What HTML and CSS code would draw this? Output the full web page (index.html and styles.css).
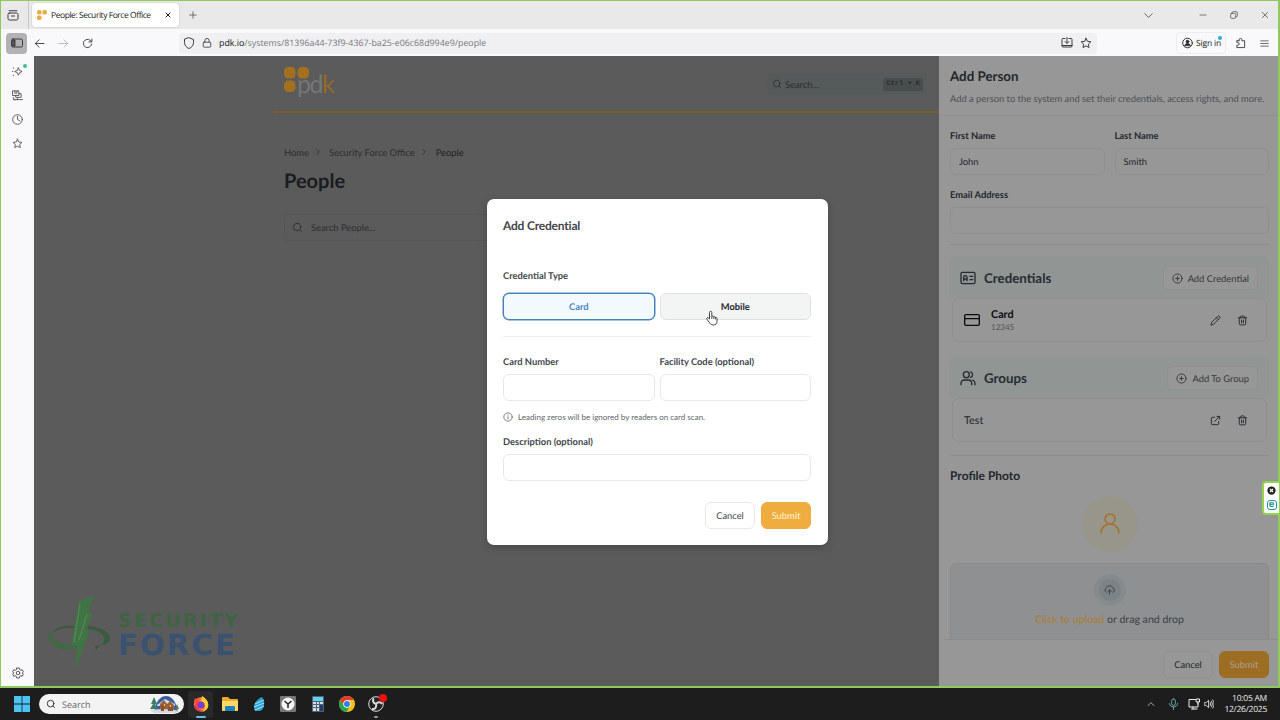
FILE: index.html
```html
<!DOCTYPE html>
<html lang="en">
<head>
  <meta charset="UTF-8">
  <title>People: Security Force Office</title>
  <link rel="stylesheet" href="styles.css">
</head>
<body>
  <svg class="sprite" aria-hidden="true">
    <symbol id="search" viewBox="0 0 24 24"><circle cx="11" cy="11" r="8"/><path d="M21 21l-4.3-4.3"/></symbol>
    <symbol id="chevron" viewBox="0 0 24 24"><path d="M9 18l6-6-6-6"/></symbol>
    <symbol id="plus-circle" viewBox="0 0 24 24"><circle cx="12" cy="12" r="10"/><path d="M12 8v8M8 12h8"/></symbol>
    <symbol id="id-card" viewBox="0 0 24 24"><rect x="1.500" y="3.500" width="21" height="17" rx="2"/><path d="M5.500 16v-5a2.500 2.500 0 0 1 5 0v5M5.500 13.500h5M15 9.500h4M15 14.500h4"/></symbol>
    <symbol id="card" viewBox="0 0 24 24"><rect x="1" y="4" width="22" height="16" rx="2"/><path d="M1 10h22"/></symbol>
    <symbol id="users" viewBox="0 0 24 24"><circle cx="9.500" cy="7" r="4.500"/><path d="M1.500 22v-2a5 5 0 0 1 5-5h6a5 5 0 0 1 5 5v2M16 2.800a4.500 4.500 0 0 1 0 8.400M22.500 22v-2a5 5 0 0 0-3.500-4.700"/></symbol>
    <symbol id="pencil" viewBox="0 0 24 24"><path d="M17 3a2.830 2.830 0 0 1 4 4L7.500 20.500 2 22l1.500-5.500zM14 6l4 4"/></symbol>
    <symbol id="trash" viewBox="0 0 24 24"><path d="M3 6h18M5 6v13a2.500 2.500 0 0 0 2.500 2.500h9A2.500 2.500 0 0 0 19 19V6M8 6V4a2 2 0 0 1 2-2h4a2 2 0 0 1 2 2v2M10 11v6M14 11v6"/></symbol>
    <symbol id="external" viewBox="0 0 24 24"><path d="M10 5H5a2 2 0 0 0-2 2v12a2 2 0 0 0 2 2h12a2 2 0 0 0 2-2v-5M15 3h6v6M10 14L21 3"/></symbol>
    <symbol id="user" viewBox="0 0 24 24"><circle cx="12" cy="7" r="5"/><path d="M3 21c0-5 4-9 9-9s9 4 9 9"/></symbol>
    <symbol id="cloud" viewBox="0 0 24 24"><path d="M5 17A5 5 0 0 1 5 8a7.500 7.500 0 0 1 14-1 5.200 5.200 0 0 1 0 10M8 16l4-4 4 4M12 12v9"/></symbol>
    <symbol id="info" viewBox="0 0 24 24"><circle cx="12" cy="12" r="10"/><path d="M12 11v6M12 7v1"/></symbol>
    <symbol id="star" viewBox="0 0 24 24"><path d="M12 2.500l3 6.200 6.700.9-4.900 4.700 1.200 6.800-6-3.300-6 3.300 1.200-6.800-4.900-4.700 6.700-.9z"/></symbol>
    <symbol id="close" viewBox="0 0 24 24"><path d="M4 4l16 16M20 4L4 20"/></symbol>
    <symbol id="arrow" viewBox="0 0 24 24"><path d="M22 12H3M11 4l-8 8 8 8"/></symbol>
    <symbol id="pdk-dots" viewBox="0 0 24 24"><rect width="11" height="11" rx="4"/><rect x="13" width="11" height="11" rx="4"/><rect y="13" width="11" height="11" rx="4"/></symbol>
  </svg>

  <div class="browser">
    <div class="tabbar">
      <div class="tab-history">
        <svg class="icon" viewBox="0 0 24 24"><rect x="2" y="8" width="20" height="14" rx="3"/><path d="M4 3.500h16M9 14h6"/></svg>
      </div>
      <div class="tab">
        <svg class="favicon"><use href="#pdk-dots"/></svg>
        <span>People: Security Force Office</span>
        <svg class="icon tab-close"><use href="#close"/></svg>
      </div>
      <svg class="icon new-tab" viewBox="0 0 24 24"><path d="M12 2v20M2 12h20"/></svg>
      <div class="window-controls">
        <svg class="icon list-tabs" viewBox="0 0 24 24"><path d="M2 7l10 10L22 7"/></svg>
        <svg class="icon minimize" viewBox="0 0 24 24"><path d="M3 12h18"/></svg>
        <svg class="icon restore" viewBox="0 0 24 24"><rect x="2" y="7" width="15" height="15" rx="3"/><path d="M7 6V5a3 3 0 0 1 3-3h8a4 4 0 0 1 4 4v8a3 3 0 0 1-3 3h-1"/></svg>
        <svg class="icon close"><use href="#close"/></svg>
      </div>
    </div>

    <div class="toolbar">
      <div class="sidebar-toggle">
        <svg class="icon" viewBox="0 0 24 24"><rect x="1" y="4" width="22" height="16" rx="3"/><path d="M3 6h5v12H3z" fill="#555"/></svg>
      </div>
      <svg class="icon nav"><use href="#arrow"/></svg>
      <svg class="icon nav forward"><use href="#arrow"/></svg>
      <svg class="icon nav reload" viewBox="0 0 24 24"><path d="M21 13a9 9 0 1 1-3-7.700L21 8M21.500 2v6.500H15"/></svg>
      <div class="urlbar">
        <svg class="icon" viewBox="0 0 24 24"><path d="M12 1.500l9 3.500v6c0 6-4 10-9 12-5-2-9-6-9-12V5z"/></svg>
        <svg class="icon lock" viewBox="0 0 24 24"><rect x="3" y="10" width="18" height="12" rx="2"/><path d="M7 10V6a5 5 0 0 1 10 0v4"/></svg>
        <p class="url"><b>pdk.io</b>/systems/81396a44-73f9-4367-ba25-e06c68d994e9/people</p>
        <svg class="icon install" viewBox="0 0 24 24"><path d="M8 3H4a2 2 0 0 0-2 2v13a2 2 0 0 0 2 2h16a2 2 0 0 0 2-2V5a2 2 0 0 0-2-2h-4M12 1v11M8 9l4 4 4-4M2 17h20"/></svg>
        <svg class="icon"><use href="#star"/></svg>
      </div>
      <div class="sign-in">
        <svg class="icon" viewBox="0 0 24 24"><circle cx="12" cy="12" r="10.500"/><circle cx="12" cy="9" r="3" fill="#333"/><path d="M6 17c1-5 11-5 12 0z" fill="#333"/></svg>
        <span>Sign in</span>
        <i class="dot"></i>
      </div>
      <svg class="icon puzzle" viewBox="0 0 24 24"><path d="M9 7V5a3 3 0 0 1 6 0v2h6v15H4v-5h2a3 3 0 0 0 0-6H4V7z"/></svg>
      <svg class="icon menu" viewBox="0 0 24 24"><path d="M2 5h20M2 12h20M2 19h20"/></svg>
    </div>

    <div class="viewport">
      <nav class="sidebar">
        <span class="ai">
          <svg class="icon" viewBox="0 0 24 24"><path d="M14 4l2.500 5.500L22 12l-5.500 2.500L14 20l-2.500-5.500L6 12l5.500-2.500zM3 4v1M3 20v1M1 12h1"/></svg>
          <i class="dot"></i>
        </span>
        <svg class="icon" viewBox="0 0 24 24"><path d="M2 2h13v10H2zM6 2v5h5V2M15 8h5v8H8v-4M5 21h18M12 17v4M3 16v5h4"/></svg>
        <svg class="icon" viewBox="0 0 24 24"><circle cx="12" cy="12" r="10.500"/><path d="M12 5v7l5 3"/></svg>
        <svg class="icon"><use href="#star"/></svg>
        <svg class="icon gear" viewBox="0 0 24 24"><circle cx="12" cy="12" r="3.500"/><path d="M9.500 2h5l.8 3.300 2 1.200 3.200-1 2.300 4-2.300 2.500 2.300 2.500-2.300 4-3.200-1-2 1.200-.8 3.300h-5l-.8-3.300-2-1.200-3.200 1-2.300-4L3.500 12 1.200 9.500l2.300-4 3.200 1 2-1.200z"/></svg>
      </nav>

      <main class="page">
        <header class="page-header">
          <div class="logo">
            <svg><use href="#pdk-dots"/></svg>
            <span>pd<em>k</em></span>
          </div>
          <div class="quick-search">
            <svg class="icon"><use href="#search"/></svg>
            <span>Search...</span>
            <kbd>Ctrl + K</kbd>
          </div>
        </header>
        <div class="breadcrumb">
          <span>Home</span>
          <svg class="icon"><use href="#chevron"/></svg>
          <span>Security Force Office</span>
          <svg class="icon"><use href="#chevron"/></svg>
          <span class="current">People</span>
        </div>
        <h1>People</h1>
        <div class="people-search">
          <svg class="icon"><use href="#search"/></svg>
          <span>Search People...</span>
        </div>
      </main>

      <aside class="drawer">
        <header class="drawer-header">
          <h2>Add Person</h2>
          <p>Add a person to the system and set their credentials, access rights, and more.</p>
        </header>
        <div class="drawer-body">
          <div class="names">
            <div class="field"><label>First Name</label><div class="input">John</div></div>
            <div class="field"><label>Last Name</label><div class="input">Smith</div></div>
          </div>
          <div class="field email"><label>Email Address</label><div class="input"></div></div>
          <hr>
          <section class="group">
            <div class="group-header">
              <svg class="icon"><use href="#id-card"/></svg>
              <h3>Credentials</h3>
              <div class="small-button"><svg class="icon"><use href="#plus-circle"/></svg><span>Add Credential</span></div>
            </div>
            <div class="group-item">
              <svg class="icon card-icon"><use href="#card"/></svg>
              <div class="item-text"><strong>Card</strong><small>12345</small></div>
              <svg class="icon action"><use href="#pencil"/></svg>
              <svg class="icon action"><use href="#trash"/></svg>
            </div>
          </section>
          <section class="group">
            <div class="group-header">
              <svg class="icon"><use href="#users"/></svg>
              <h3>Groups</h3>
              <div class="small-button"><svg class="icon"><use href="#plus-circle"/></svg><span>Add To Group</span></div>
            </div>
            <div class="group-item">
              <div class="item-text">Test</div>
              <svg class="icon action"><use href="#external"/></svg>
              <svg class="icon action"><use href="#trash"/></svg>
            </div>
          </section>
          <hr>
          <h4>Profile Photo</h4>
          <div class="avatar"><svg class="icon"><use href="#user"/></svg></div>
          <div class="upload">
            <div class="upload-icon"><svg class="icon"><use href="#cloud"/></svg></div>
            <p><span>Click to upload</span> or drag and drop</p>
          </div>
        </div>
        <footer class="actions drawer-footer">
          <div class="button cancel">Cancel</div>
          <div class="button submit">Submit</div>
        </footer>
      </aside>
    </div>

    <!-- recording watermark -->
    <div class="watermark">
      <svg viewBox="0 0 64 74">
        <path d="M31 5L46 0 40 17 45 16 38 34 42 34 27 74 29 50 23 50 26 34 28 21z" fill="#3f7544"/>
        <path d="M32 8L26 46M39 18L31 44" stroke="#5d8a5c" stroke-width="1" fill="none"/>
        <path d="M0 38C4 55 16 54 25 53L25 49C13 49 5 46 4 38z" fill="#3f6b43"/>
        <path d="M40 30C54 31 63 37 62 44 60 47 56 49 53 49 60 43 57 35 40 33zM4 37C8 31 17 29 26 30L26 32C16 31 9 34 4 37z" fill="#385a3d"/>
        <path d="M52 49L48 54 47 50z" fill="#385a3d"/>
      </svg>
      <div class="watermark-text"><b>SECURITY</b><strong>FORCE</strong></div>
    </div>

    <div class="modal">
      <h2>Add Credential</h2>
      <label>Credential Type</label>
      <div class="columns types">
        <div class="type selected">Card</div>
        <div class="type">Mobile</div>
      </div>
      <hr>
      <div class="columns">
        <div class="field"><label>Card Number</label><div class="input"></div></div>
        <div class="field"><label>Facility Code (optional)</label><div class="input"></div></div>
      </div>
      <p class="note"><svg class="icon"><use href="#info"/></svg>Leading zeros will be ignored by readers on card scan.</p>
      <div class="field"><label>Description (optional)</label><div class="input"></div></div>
      <div class="actions">
        <div class="button cancel">Cancel</div>
        <div class="button submit">Submit</div>
      </div>
    </div>

    <svg class="cursor" viewBox="0 0 24 30"><path d="M7 17V4a2.300 2.300 0 0 1 4.600 0v8c1-1.500 3.500-1 4 .8 1.500-1 3.200-.3 3.500 1.200 1.500-.6 3 .2 3 2v5c0 5-3 8-7.500 8S8 26 6 23l-4.500-6c-1-2 1.500-3.500 3-2z" fill="#fff"/><path d="M11.600 12v5M15.600 13v4M19.200 14v4"/></svg>

    <div class="side-widget">
      <svg viewBox="0 0 12 12"><circle cx="6" cy="6" r="5.500" fill="#222"/><path d="M4 4l4 4M8 4L4 8" stroke="#fff" stroke-width="1.600"/></svg>
      <b>e</b>
    </div>
  </div>

  <div class="taskbar">
    <svg class="start" viewBox="0 0 16 16"><path d="M0 0h7.600v7.600H0zM8.400 0H16v7.600H8.400zM0 8.400h7.600V16H0zM8.400 8.400H16V16H8.400z" fill="#4cc2f5"/></svg>
    <div class="task-search">
      <svg class="icon"><use href="#search"/></svg>
      <span>Search</span>
      <svg class="scene" viewBox="0 0 30 17">
        <path d="M4 16C6 4 11 0 16 0s10 4 12 16z" fill="#3b5f9b"/>
        <path d="M7 9l8-6 10 5v2H7z" fill="#cdd8e6"/>
        <path d="M10 16V8l4-4 3 4 3-3 4 4v7z" fill="#9a6039"/>
        <path d="M13 16v-3h2v3M19 16v-3h2v3M14 8h1v2h-1M20 9h1v2h-1" fill="#f5c768"/>
        <path d="M4 1l3 7H5l3 5H0l3-5H1zM27 8l2 5h-4z" fill="#417d62"/>
        <path d="M0 14c6-1 23-1 29 1l-4 2H4z" fill="#d3dae3"/>
        <path d="M11 15V9h3v6M18 15v-4h5v4" fill="#88542f"/>
      </svg>
    </div>
    <div class="apps">
      <div class="app active">
        <svg viewBox="0 0 16 16"><circle cx="8" cy="8.500" r="7.200" fill="#ff7e29"/><path d="M9 0c3 2 6 4 6.300 9 0 3-2 6-6 6.800C14 12 12 7 8 6z" fill="#ffcc38"/><path d="M1 5l1-3 2 2 3-2-1 3 3 2-3 1-3 4z" fill="#ff4b3c"/><circle cx="8" cy="9" r="3.600" fill="#7c3bd1"/><path d="M1 9c1 5 5 7 9 6-3-1-5-2-6-5z" fill="#ed2966"/></svg>
      </div>
      <div class="app"><svg viewBox="0 0 16 16"><path d="M0 2q0-1 1-1h5l2 2h7q1 0 1 1v10q0 1-1 1H1q-1 0-1-1z" fill="#e8ad2f"/><path d="M0 5h16v9q0 1-1 1H1q-1 0-1-1z" fill="#ffd965"/><path d="M3 15v-4q0-1 1-1h8q1 0 1 1v4z" fill="#1f83bd"/></svg></div>
      <div class="app"><svg viewBox="0 0 16 16"><path d="M11 1c4 6 2 12-2 14H4C1 9 5 4 11 1z" fill="#2aa2d3"/><path d="M4 8l9-4M3 11l10-4M4 14l9-4" stroke="#a7e2f4" stroke-width="1"/></svg></div>
      <div class="app"><svg viewBox="0 0 16 16"><rect width="16" height="16" rx="1" fill="#767676"/><circle cx="8" cy="8" r="6.500" fill="#f5f5f5"/><path d="M4.500 5L8 8l3.500-3M8 8v4" stroke="#222" stroke-width="1.500" fill="none"/></svg></div>
      <div class="app"><svg viewBox="0 0 16 16"><rect x="2" width="12" height="16" rx="1" fill="#4c6578"/><path d="M3 1h10v4H3z" fill="#62d3ee"/><path d="M3 6h3v2H3zM7 6h2v2H7zM10 6h3v2h-3zM3 9h3v2H3zM7 9h2v2H7zM3 12h3v3H3zM7 12h2v3H7z" fill="#d5dfe4"/><path d="M10 9h3v6h-3z" fill="#223d67"/></svg></div>
      <div class="app"><svg viewBox="0 0 16 16"><circle cx="8" cy="8" r="8" fill="#fbc116"/><path d="M1.100 4A8 8 0 0 1 14.900 4H8L5 10z" fill="#e33b2e"/><path d="M1.100 4a8 8 0 0 0 6.400 12l3.500-6-3 2-3-2z" fill="#26a651"/><circle cx="8" cy="8" r="3.800" fill="#fff"/><circle cx="8" cy="8" r="3" fill="#317fe8"/></svg></div>
      <div class="app running"><svg viewBox="0 0 16 16"><circle cx="8" cy="8" r="7.300" fill="#222" stroke="#ddd"/><path d="M8 8C5 7 4 4 6 2.500M8 8c2-2.500 5-2 6 0M8 8c1 3-1 5.500-4 5" stroke="#ddd" stroke-width="2" fill="none"/></svg><i class="dot"></i></div>
    </div>
    <div class="tray">
      <svg class="icon up" viewBox="0 0 24 24"><path d="M3 17l9-9 9 9"/></svg>
      <svg class="icon mic" viewBox="0 0 24 24"><rect x="8" y="1" width="8" height="14" rx="4"/><path d="M3 11c0 10 18 10 18 0M12 19v5"/></svg>
      <svg class="icon network" viewBox="0 0 24 24"><path d="M15 3H2v15h18v-7M7 22h11M10 18v4M17 2h6v6h-6zM20 8v4"/></svg>
      <svg class="icon volume" viewBox="0 0 24 24"><path d="M1 9h4l6-6v18l-6-6H1zM15 8q3 4 0 8M18 5q5 7 0 14M21 2q7 10 0 20"/></svg>
      <div class="clock"><span>10:05 AM</span><span>12/26/2025</span></div>
    </div>
  </div>
</body>
</html>
```
FILE: styles.css
```css
* {
  box-sizing: border-box;
}

body {
  margin: 0;
  width: 1280px;
  height: 720px;
  overflow: hidden;
  font-family: Lato, "Liberation Sans", sans-serif;
  font-size: 9.35px;
  text-rendering: geometricPrecision;
  color: #22272d;
}

h1, h2, h3, h4, p {
  margin: 0;
}

svg {
  display: block;
  flex-shrink: 0;
}

.sprite {
  position: absolute;
  width: 0;
  height: 0;
}

.icon {
  width: 12px;
  height: 12px;
  fill: none;
  stroke: currentColor;
  stroke-width: 2;
  stroke-linecap: round;
  stroke-linejoin: round;
}

.dot {
  position: absolute;
  border-radius: 50%;
}

/* browser chrome */
.browser {
  position: relative;
  height: 688px;
  border: solid #91c95f;
  border-width: 1px 2px 2px 1px;
  background: #f9f9fb;
}

.tabbar, .toolbar {
  display: flex;
  align-items: center;
  font-family: "Open Sans", sans-serif;
  color: #3c3c40;
}

.tabbar {
  height: 28px;
  background: #e9e9ea;
}

.tab-history {
  display: flex;
  align-items: center;
  width: 28px;
  height: 28px;
  padding-left: 6px;
  border-right: 1px solid #c8c8ca;
}

.tab {
  display: flex;
  align-items: center;
  width: 147px;
  height: 24px;
  margin-left: 3px;
  padding: 0 8px 0 5px;
  border-radius: 4px;
  background: #fff;
  box-shadow: 0 0 2px #bbb;
  font-size: 8.5px;
  letter-spacing: -0.45px;
  color: #202024;
  white-space: nowrap;
}

.favicon {
  width: 10px;
  height: 10px;
  margin-right: 4px;
  fill: #e5ae4c;
}

.tab-close {
  width: 6px;
  height: 6px;
  margin-left: auto;
  stroke-width: 4;
}

.new-tab {
  width: 8px;
  height: 8px;
  margin-left: 10px;
}

.window-controls {
  display: flex;
  align-items: center;
  margin-left: auto;
  padding-right: 9px;
}

.list-tabs {
  width: 9px;
  height: 9px;
  margin-right: 46px;
}

.minimize, .restore {
  width: 8px;
  height: 8px;
  margin-right: 23px;
}

.close {
  width: 8px;
  height: 8px;
}

.toolbar {
  height: 27px;
  padding: 1px 9px 0 5px;
}

.sidebar-toggle {
  display: flex;
  align-items: center;
  justify-content: center;
  width: 21px;
  height: 21px;
  border-radius: 4px;
  background: #b2b2b5;
}

.nav {
  width: 11px;
  height: 11px;
  margin-left: 7px;
}

.forward {
  margin-left: 13px;
  color: #b5b5b8;
  transform: scaleX(-1);
}

.reload {
  margin-left: 13px;
}

.urlbar {
  display: flex;
  align-items: center;
  width: 918px;
  height: 21px;
  margin-left: 86px;
  padding: 0 5px 0 4px;
  border-radius: 4px;
  background: #f0f0f2;
}

.lock {
  width: 10px;
  margin-left: 7px;
}

.url {
  margin: 0 auto 0 7px;
  font-size: 8.85px;
  color: #77777c;
  white-space: nowrap;
}

.url b {
  font-weight: 400;
  color: #111;
}

.install {
  margin-right: 7px;
}

.sign-in {
  position: relative;
  display: flex;
  align-items: center;
  gap: 3px;
  width: 50px;
  height: 22px;
  margin-left: 79px;
  padding-left: 5px;
  border: 1px solid #ececef;
  border-radius: 4px;
  font-size: 8.5px;
  letter-spacing: -0.15px;
  color: #222;
  white-space: nowrap;
}

.sign-in .icon {
  width: 11px;
}

.sign-in .dot {
  top: 3px;
  right: 3px;
  width: 4px;
  height: 4px;
  background: #2ba9d8;
}

.puzzle {
  width: 11px;
  margin-left: 9px;
}

.menu {
  width: 9px;
  height: 9px;
  margin-left: auto;
}

.viewport {
  display: flex;
  height: 630px;
}

.sidebar {
  display: flex;
  flex-direction: column;
  align-items: center;
  gap: 13px;
  width: 33px;
  padding: 10px 0 7px;
  color: #55555a;
}

.sidebar .icon {
  width: 11px;
  height: 11px;
}

.ai {
  position: relative;
}

.ai .dot {
  top: -2px;
  right: -4px;
  width: 4px;
  height: 4px;
  background: #43bd91;
}

.sidebar .gear {
  width: 12px;
  height: 12px;
  margin-top: auto;
}

/* page behind the overlay */
.page {
  flex: 1;
  padding-left: 250px;
  background: #5b5b5b;
  color: #2b2e31;
}

.page-header {
  display: flex;
  align-items: flex-start;
  justify-content: space-between;
  height: 57px;
  margin-left: -11px;
  padding: 11px 12px 0 11px;
  border-bottom: 2px solid #7c5e2c;
}

.logo {
  display: flex;
}

.logo svg {
  width: 25px;
  height: 25px;
  fill: #a2701e;
}

.logo span {
  margin: 3px 0 0 -12px;
  font-size: 25px;
  line-height: 28px;
  letter-spacing: -1.5px;
  color: #747678;
}

.logo em {
  font-style: normal;
  color: #946a28;
}

.quick-search {
  display: flex;
  align-items: center;
  width: 160px;
  height: 22px;
  margin-top: 6px;
  padding: 0 3px 0 4px;
  border: 1px solid #565a59;
  border-radius: 4px;
  background: #575a5a;
}

.quick-search .icon {
  width: 10px;
  height: 10px;
  margin-right: 3px;
}

kbd {
  margin-left: auto;
  padding: 0 3px;
  border-radius: 2px;
  background: #4a4d4e;
  font: bold 7px/13px "Liberation Mono", monospace;
}

.breadcrumb {
  display: flex;
  align-items: center;
  height: 12px;
  margin-top: 33px;
}

.breadcrumb .icon {
  width: 10px;
  height: 10px;
  margin: 0 6px 0 4px;
}

.breadcrumb .current {
  margin-left: 1px;
  color: #1c1f23;
}

h1 {
  margin-top: 11px;
  font-size: 20px;
  line-height: 24px;
  color: #191d21;
}

.people-search {
  display: flex;
  align-items: center;
  gap: 8px;
  width: 300px;
  height: 27px;
  margin-top: 21px;
  padding-left: 7px;
  border: 1px solid #555;
  border-radius: 4px;
}

.people-search .icon {
  width: 11px;
  height: 11px;
}

/* add person drawer */
.drawer {
  display: flex;
  flex-direction: column;
  width: 339px;
  background: #979797;
}

.drawer-header {
  height: 60px;
  padding: 12px 0 0 11px;
  border-bottom: 1px solid #8e8e8e;
}

.drawer-header h2 {
  font-size: 13.33px;
  line-height: 17px;
}

.drawer-header p {
  margin-top: 8px;
  line-height: 12px;
  color: #4d5156;
  white-space: nowrap;
}

.drawer-body {
  flex: 1;
  min-height: 0;
  overflow: hidden;
  padding: 14px 9px 0 11px;
}

.names {
  display: grid;
  grid-template-columns: 1fr 1fr;
  gap: 10px;
}

label {
  display: block;
  line-height: 12px;
  margin-bottom: 6px;
  font-weight: 700;
}

.input {
  height: 27px;
  padding: 0 8px;
  border: 1px solid #8e9090;
  border-radius: 6px;
  line-height: 26px;
}

.email {
  margin-top: 14px;
}

hr {
  height: 1px;
  margin: 10px 0 0;
  border: 0;
  background: #8c8c8c;
}

.group {
  height: 88px;
  margin: 11px 0 0 -1px;
  padding: 0 2px 0 3px;
  border-radius: 6px;
  background: linear-gradient(#919594 42px, #979797 42px);
}

.group + .group {
  margin-top: 12px;
}

.group + hr {
  margin-top: 11px;
}

.group-header {
  display: flex;
  align-items: center;
  height: 42px;
  padding: 2px 9px 0 8px;
  color: #252b31;
}

.group-header > .icon {
  width: 16px;
  height: 16px;
  margin-right: 8px;
}

h3 {
  font-size: 13.33px;
}

.small-button {
  display: flex;
  align-items: center;
  gap: 5px;
  height: 24px;
  margin-left: auto;
  padding: 0 8px;
  border: 1px solid #8f9191;
  border-radius: 5px;
  background: #979797;
  color: #33383d;
}

.small-button .icon {
  width: 11px;
  height: 11px;
}

.group-item {
  display: flex;
  align-items: center;
  gap: 16px;
  height: 44px;
  padding: 0 18px 0 11px;
  border: 1px solid #8e9090;
  border-radius: 7px;
  background: #979797;
}

.card-icon {
  width: 16px;
  height: 16px;
  margin-right: -5px;
  color: #0c0d0e;
}

.item-text {
  flex: 1;
  font-size: 10.8px;
}

.item-text strong, .item-text small {
  display: block;
  line-height: 13px;
}

.item-text strong {
  margin-top: 1px;
  color: #0c0d0e;
}

.item-text small {
  font-size: 8px;
  color: #50545a;
}

.action {
  width: 11px;
  height: 11px;
}

h4 {
  margin-top: 12px;
  font-size: 12px;
  line-height: 15px;
}

.avatar {
  display: grid;
  place-items: center;
  width: 56px;
  height: 56px;
  margin: 13px auto 11px;
  border-radius: 50%;
  background: #98958b;
  color: #a47128;
}

.avatar .icon {
  width: 24px;
  height: 24px;
  stroke-width: 1.5;
}

.upload {
  height: 84px;
  padding-top: 10px;
  border: 1px solid #88898b;
  border-radius: 6px;
  background: #8f9092;
  font-size: 10.6px;
  text-align: center;
  color: #3b4045;
}

.upload-icon {
  display: grid;
  place-items: center;
  width: 32px;
  height: 32px;
  margin: 0 auto 8px;
  border: 5px solid #858b8d;
  border-radius: 50%;
  background: #7b8386;
}

.upload-icon .icon {
  width: 11px;
}

.upload span {
  color: #ad7c2f;
}

.actions {
  display: flex;
  justify-content: flex-end;
  gap: 6px;
}

.button {
  width: 50px;
  height: 27px;
  border: 1px solid #e6e8eb;
  border-radius: 6px;
  line-height: 26px;
  text-align: center;
}

.submit {
  border-color: #efad3f;
  background: #efad3f;
  color: #fff3d8;
}

.drawer-footer {
  height: 47px;
  margin-left: 5px;
  padding: 11px 9px 0 0;
  border-top: 1px solid #8c8c8c;
}

.drawer-footer .cancel {
  border-color: #8f9090;
}

.drawer-footer .submit {
  border-color: #9e6d24;
  background: #9e6d24;
  color: #aaa08c;
}

/* credential dialog */
.modal {
  position: absolute;
  top: 198px;
  left: 486px;
  width: 341px;
  height: 346px;
  padding: 19px 17px 0 16px;
  border-radius: 7px;
  background: #fff;
  box-shadow: 0 3px 8px rgba(0, 0, 0, 0.2);
  color: #41464c;
}

.modal h2 {
  margin-bottom: 36px;
  font-size: 12px;
  line-height: 16px;
  letter-spacing: -0.2px;
}

.columns {
  display: grid;
  grid-template-columns: 1fr 1fr;
  gap: 5px;
}

.types {
  margin-top: 11px;
}

.type {
  height: 27px;
  border: 1px solid #dfe2e4;
  border-radius: 6px;
  background: #f3f5f5;
  line-height: 26px;
  font-weight: 700;
  text-align: center;
  color: #24282d;
}

.selected {
  border-color: #4682b4;
  box-shadow: 0 0 0 0.5px #4b8bc0;
  background: #f3faff;
  color: #4a83bd;
}

.modal > label {
  margin-bottom: 0;
}

.modal hr {
  margin: 16px 0 19px;
  background: #eceeef;
}

.modal .input {
  border-color: #e6e8ea;
}

.note {
  display: flex;
  align-items: center;
  height: 12px;
  margin: 10px 0 13px;
  font-size: 8px;
  color: #62676d;
}

.note .icon {
  width: 10px;
  height: 10px;
  margin-right: 5px;
}

.modal .actions {
  margin-top: 21px;
}

/* things floating above the page */
.watermark {
  position: absolute;
  top: 595px;
  left: 47px;
  display: flex;
}

.watermark svg {
  width: 64px;
  height: 74px;
}

.watermark-text {
  padding: 14px 0 0 6px;
  font-family: "DejaVu Sans", sans-serif;
}

.watermark-text b, .watermark-text strong {
  display: block;
  color: #3f6443;
  font-size: 19px;
  line-height: 23px;
  letter-spacing: 2.2px;
}

.watermark-text strong {
  color: #3a5270;
  font-size: 29px;
  line-height: 24px;
}

.cursor {
  position: absolute;
  top: 309px;
  left: 705px;
  width: 12px;
  height: 16px;
  fill: none;
  stroke: #333;
  stroke-width: 1.8;
}

.side-widget {
  position: absolute;
  top: 480px;
  right: -2px;
  display: flex;
  flex-direction: column;
  align-items: center;
  justify-content: space-around;
  width: 18px;
  height: 34px;
  border: 2px solid #91d54d;
  border-right-width: 1px;
  border-radius: 4px 0 0 4px;
  background: #fff;
}

.side-widget svg {
  width: 9px;
  height: 9px;
}

.side-widget b {
  width: 10px;
  height: 10px;
  border: 1px solid #229197;
  border-radius: 3px;
  font: bold 10px/7px "Liberation Sans", sans-serif;
  text-align: center;
  color: #229197;
}

/* windows taskbar */
.taskbar {
  display: flex;
  align-items: center;
  height: 32px;
  padding: 0 13px 0 14px;
  background: #1d1d1d;
  font-family: "Open Sans", sans-serif;
  color: #eee;
}

.start {
  width: 16px;
  height: 16px;
}

.task-search {
  display: flex;
  align-items: center;
  width: 145px;
  height: 20px;
  margin-left: 9px;
  padding: 0 4px 0 7px;
  border-radius: 10px;
  background: #f3f3f3;
  font-size: 9px;
  color: #66666a;
}

.task-search .icon {
  width: 10px;
  margin-right: 6px;
  color: #222;
}

.scene {
  width: 30px;
  height: 17px;
  margin-left: auto;
}

.apps {
  display: flex;
  margin-left: 4px;
}

.app {
  position: relative;
  display: grid;
  place-items: center;
  width: 25px;
  height: 27px;
  margin-right: 4.3px;
  border-radius: 3px;
}

.app svg {
  width: 16px;
  height: 16px;
}

.active {
  background: #292929;
}

.active::after, .running::after {
  content: "";
  position: absolute;
  bottom: 0;
  width: 10px;
  height: 2px;
  border-radius: 1px;
  background: #61bfe5;
}

.running::after {
  width: 4px;
  background: #999;
}

.app .dot {
  top: 3px;
  right: 2px;
  width: 8px;
  height: 8px;
  background: #ef1111;
}

.tray {
  display: flex;
  align-items: center;
  margin-left: auto;
}

.up {
  width: 8px;
  margin-right: 13px;
}

.mic {
  width: 11px;
  margin-right: 9px;
  color: #6fb3b5;
}

.network {
  width: 12px;
  margin-right: 4px;
}

.volume {
  width: 10px;
}

.clock {
  width: 53px;
  font-size: 8.5px;
  line-height: 11px;
  letter-spacing: -0.25px;
  text-align: right;
}

.clock span {
  display: block;
}
```
